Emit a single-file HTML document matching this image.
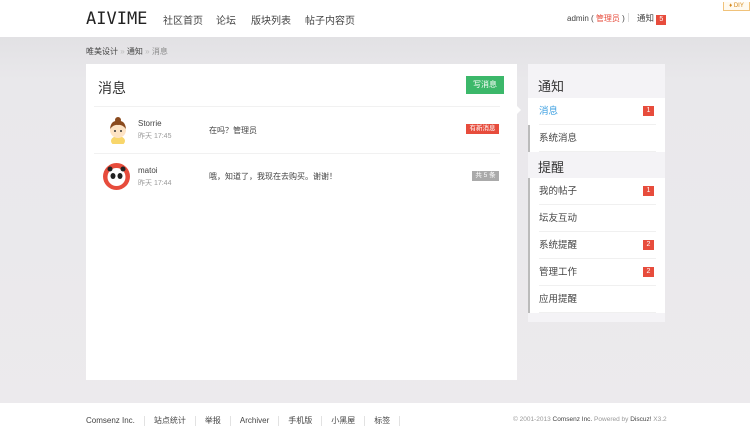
<!DOCTYPE html>
<html><head><meta charset="utf-8"><style>
*{margin:0;padding:0;box-sizing:border-box}
body{width:750px;height:436px;overflow:hidden;background:linear-gradient(#dcdbde,#e9e8eb 80px,#eceaed);font-family:"Liberation Sans","Noto Sans CJK SC",sans-serif;color:#333;position:relative}
.abs{position:absolute}
.hdr{left:0;top:0;width:750px;height:37px;background:#fff}
.logo{left:86px;top:9px;font-family:"DejaVu Sans Mono","Liberation Mono",monospace;font-size:17px;color:#222}
.nav{top:12px;font-size:10px;color:#444}
.main{left:86px;top:64px;width:431px;height:316px;background:#fff}
.side{left:528px;top:64px;width:137px;height:258px;background:#f4f3f6}
.it{position:absolute;left:0;width:137px;height:27px;line-height:27px;background:#fff;border-left:2px solid #bbb;font-size:9.5px;padding:0 0 0 9px;color:#444}
.it:after{content:"";position:absolute;left:9px;right:9px;bottom:0;border-bottom:1px solid #f0f0f0}
.bd{position:absolute;right:11px;top:8px;width:11px;height:10px;background:#e74c3c;color:#fff;font-size:7px;text-align:center;line-height:10px}
.ft{left:0;top:403px;width:750px;height:33px;background:#fff;font-size:8px;color:#444}
.sep{display:inline-block;width:1px;height:10px;background:#e2e2e2;margin:0 9px;vertical-align:middle}
</style></head><body>
<div class="abs hdr"></div>
<div class="abs logo">AIVIME</div>
<div class="abs nav" style="left:163px">社区首页</div>
<div class="abs nav" style="left:216px">论坛</div>
<div class="abs nav" style="left:251px">版块列表</div>
<div class="abs nav" style="left:305px">帖子内容页</div>
<div class="abs" style="left:567px;top:13px;font-size:8px;color:#444">admin ( <span style="color:#e74c3c">管理员</span> )</div>
<div class="abs" style="left:628px;top:13px;width:1px;height:9px;background:#ddd"></div>
<div class="abs" style="left:637px;top:12px;font-size:8.5px;color:#444">通知 <span style="display:inline-block;background:#e74c3c;color:#fff;width:10px;height:10px;text-align:center;font-size:7px;line-height:10px">5</span></div>
<div class="abs" style="left:723px;top:2px;width:27px;height:9px;border:1px solid #f0c27a;border-top:none;font-size:6px;color:#d58a1e;text-align:center;line-height:8px;background:#fffaf0">♦ DIY</div>
<div class="abs" style="left:86px;top:46px;font-size:8px;color:#444">唯美设计 <span style="color:#bbb">»</span> 通知 <span style="color:#bbb">»</span> <span style="color:#888">消息</span></div>

<div class="abs main">
 <div class="abs" style="left:12px;top:14px;font-size:14px;color:#333">消息</div>
 <div class="abs" style="left:380px;top:12px;width:38px;height:18px;background:#3cb86a;color:#fff;font-size:8px;text-align:center;line-height:18px">写消息</div>
 <div class="abs" style="left:8px;top:42px;width:406px;border-top:1px solid #f1f1f1"></div>
 <svg class="abs" style="left:18px;top:52px" width="28" height="28" viewBox="0 0 28 28"><ellipse cx="14" cy="25" rx="7" ry="5" fill="#f8d66b"/><circle cx="14" cy="14" r="8" fill="#fde3c4"/><path d="M6 13 Q7 4 14 5 Q21 4 22 13 Q18 8 14 9 Q10 8 6 13Z" fill="#8a4a1e"/><circle cx="14" cy="4" r="3" fill="#8a4a1e"/><circle cx="11" cy="15" r="1" fill="#333"/><circle cx="17" cy="15" r="1" fill="#333"/></svg>
 <div class="abs" style="left:52px;top:55px;font-size:8px;color:#444">Storrie</div>
 <div class="abs" style="left:52px;top:67px;font-size:7px;color:#999">昨天 17:45</div>
 <div class="abs" style="left:123px;top:61px;font-size:8px;color:#444">在吗？管理员</div>
 <div class="abs" style="left:380px;top:60px;width:33px;height:10px;background:#e74c3c;color:#fff;font-size:6.5px;text-align:center;line-height:10px">有新消息</div>
 <div class="abs" style="left:8px;top:89px;width:406px;border-top:1px solid #f1f1f1"></div>
 <svg class="abs" style="left:17px;top:99px" width="27" height="27" viewBox="0 0 27 27"><circle cx="13.5" cy="13.5" r="13.5" fill="#e74c3c"/><circle cx="13.5" cy="14" r="9" fill="#fff"/><ellipse cx="10" cy="13" rx="2.5" ry="3" fill="#222"/><ellipse cx="17" cy="13" rx="2.5" ry="3" fill="#222"/><circle cx="7" cy="6" r="2.5" fill="#222"/><circle cx="20" cy="6" r="2.5" fill="#222"/></svg>
 <div class="abs" style="left:52px;top:102px;font-size:8px;color:#444">matoi</div>
 <div class="abs" style="left:52px;top:114px;font-size:7px;color:#999">昨天 17:44</div>
 <div class="abs" style="left:123px;top:107px;font-size:8px;color:#444">哦，知道了，我现在去购买。谢谢！</div>
 <div class="abs" style="left:386px;top:107px;width:27px;height:10px;background:#aaa;color:#fff;font-size:6.5px;text-align:center;line-height:10px">共 5 条</div>
</div>
<div class="abs" style="left:517px;top:106px;width:0;height:0;border-top:4px solid transparent;border-bottom:4px solid transparent;border-left:4px solid #fff"></div>

<div class="abs side">
 <div class="abs" style="left:10px;top:12px;font-size:13px;color:#333">通知</div>
 <div class="it" style="top:34px;border-left-color:#fff;color:#3a9ee0">消息<span class="bd">1</span></div>
 <div class="it" style="top:61px">系统消息</div>
 <div class="abs" style="left:10px;top:93px;font-size:13px;color:#333">提醒</div>
 <div class="it" style="top:114px">我的帖子<span class="bd">1</span></div>
 <div class="it" style="top:141px">坛友互动</div>
 <div class="it" style="top:168px">系统提醒<span class="bd">2</span></div>
 <div class="it" style="top:195px">管理工作<span class="bd">2</span></div>
 <div class="it" style="top:222px">应用提醒</div>
</div>

<div class="abs ft">
 <div class="abs" style="left:86px;top:12px;white-space:nowrap">Comsenz Inc.<span class="sep"></span>站点统计<span class="sep"></span>举报<span class="sep"></span>Archiver<span class="sep"></span>手机版<span class="sep"></span>小黑屋<span class="sep"></span>标签<span class="sep"></span></div>
 <div class="abs" style="left:513px;top:13px;font-size:6.5px;color:#999;white-space:nowrap">© 2001-2013 <span style="color:#444">Comsenz Inc.</span> Powered by <span style="color:#444">Discuz!</span> X3.2</div>
</div>
</body></html>
